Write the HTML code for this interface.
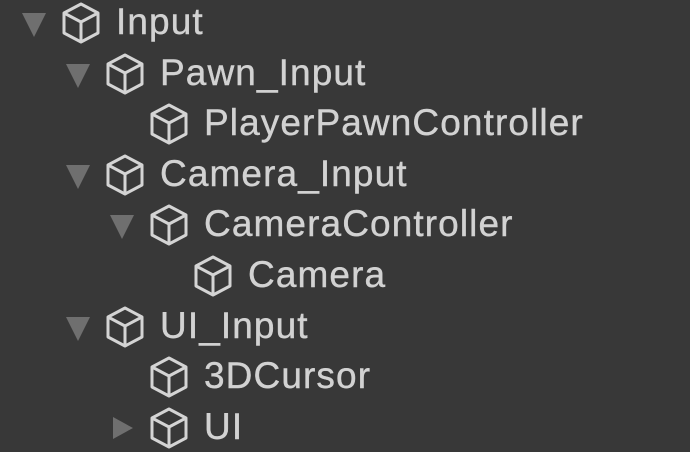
<!DOCTYPE html>
<html><head><style>
body{margin:0;width:690px;height:452px;background:#383838;overflow:hidden;font-family:"Liberation Sans",sans-serif;}
.t{position:absolute;top:0;font-size:37px;letter-spacing:1.1px;color:#d2d2d2;line-height:42px;white-space:nowrap;-webkit-text-stroke:0.4px #d2d2d2;}
svg{position:absolute;}
</style></head><body>
<svg width="0" height="0" style="position:absolute"><defs>
<g id="cube" fill="none" stroke="#d4d4d4" stroke-width="3" stroke-linejoin="round"><path d="M19 3 L36 12 L36 32 L19 41 L2 32 L2 12 Z"/><path d="M2 12 L19 21 L36 12 M19 21 L19 41"/></g>
<path id="down" d="M0 0 L24 0 L12 24 Z" fill="#6f6f6f"/>
<path id="right" d="M0 0 L20 11 L0 22 Z" fill="#6f6f6f"/>
</defs></svg>
<div id="rows"></div>
<script>
var rows=[[0,1,"Input"],[1,1,"Pawn_Input"],[2,0,"PlayerPawnController"],[1,1,"Camera_Input"],[2,1,"CameraController"],[3,0,"Camera"],[1,1,"UI_Input"],[2,0,"3DCursor"],[2,2,"UI"]];
var h="";
rows.forEach(function(r,i){var y=i*50.6+1;var x=22+r[0]*44;
if(r[1]==1)h+='<svg style="left:'+x+'px;top:'+(y+12)+'px" width="24" height="24"><use href="#down"/></svg>';
if(r[1]==2)h+='<svg style="left:'+(x+3)+'px;top:'+(y+11)+'px" width="22" height="22"><use href="#right"/></svg>';
h+='<svg style="left:'+(x+40)+'px;top:'+y+'px" width="40" height="44"><use href="#cube"/></svg>';
h+='<div class="t" style="left:'+(x+94)+'px;top:'+y+'px">'+r[2]+'</div>';});
document.getElementById("rows").innerHTML=h;
</script>
</body></html>
